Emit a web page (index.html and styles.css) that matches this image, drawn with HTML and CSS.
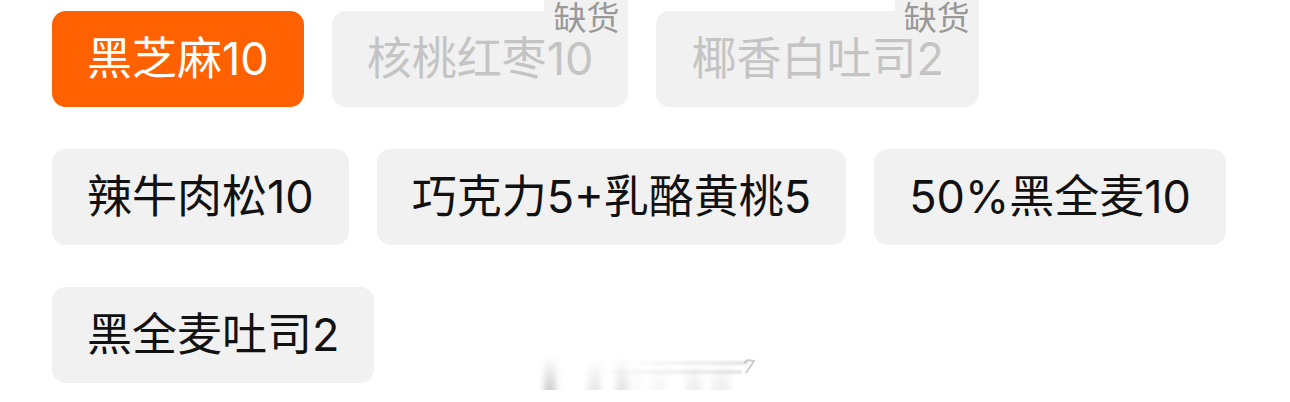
FILE: index.html
```
<!DOCTYPE html>
<html lang="zh-CN">
<head>
    <meta charset="UTF-8">
    <meta name="viewport" content="width=device-width, initial-scale=1.0">
    <title>选择口味</title>
    <link rel="stylesheet" href="styles.css">
</head>
<body>
    <div class="options">
        <button type="button" class="option selected">黑芝麻10</button>
        <button type="button" class="option" disabled>核桃红枣10<span class="badge">缺货</span></button>
        <button type="button" class="option" disabled>椰香白吐司2<span class="badge">缺货</span></button>
        <button type="button" class="option">辣牛肉松10</button>
        <button type="button" class="option">巧克力5+乳酪黄桃5</button>
        <button type="button" class="option">50%黑全麦10</button>
        <button type="button" class="option">黑全麦吐司2</button>
    </div>

    <!-- Faded watermark -->
    <svg class="watermark" viewBox="0 0 230 40" aria-hidden="true">
        <defs>
            <linearGradient id="fade" x1="0" y1="0" x2="0" y2="1">
                <stop offset="0" stop-color="#777" stop-opacity="0"/>
                <stop offset="1" stop-color="#777" stop-opacity="0.35"/>
            </linearGradient>
            <linearGradient id="line" x1="0" y1="0" x2="1" y2="0">
                <stop offset="0" stop-color="#999" stop-opacity="0"/>
                <stop offset="1" stop-color="#999" stop-opacity="0.25"/>
            </linearGradient>
            <filter id="soft" x="-5%" y="-10%" width="110%" height="110%">
                <feGaussianBlur stdDeviation="3 0"/>
            </filter>
            <filter id="haze" x="-5%" y="-100%" width="110%" height="300%">
                <feGaussianBlur stdDeviation="1"/>
            </filter>
        </defs>
        <g fill="url(#fade)" filter="url(#soft)">
            <rect x="14" y="2" width="12" height="34"/>
            <rect x="58" y="6" width="13" height="30" opacity="0.5"/>
            <rect x="86" y="4" width="12" height="32" opacity="0.6"/>
            <rect x="103" y="10" width="6" height="26" opacity="0.2"/>
            <rect x="122" y="6" width="14" height="30" opacity="0.2"/>
            <rect x="156" y="6" width="16" height="30" opacity="0.35"/>
            <rect x="182" y="8" width="18" height="28" opacity="0.35"/>
        </g>
        <rect x="90" y="7" width="128" height="4" fill="url(#line)" filter="url(#haze)"/>
        <rect x="60" y="16" width="152" height="4" fill="url(#line)" filter="url(#haze)"/>
        <path d="M214 9 L218 6 L224 7 L216 19" fill="none" stroke="#aaa" stroke-opacity="0.6" stroke-width="2"/>
    </svg>
</body>
</html>
```

FILE: styles.css
```
body {
    margin: 0;
    background-color: #fff;
    font-family: Inter, "Noto Sans CJK SC", sans-serif;
}

.options {
    display: flex;
    flex-wrap: wrap;
    gap: 42px 28px;
    padding: 11px 52px 0;
}

.option {
    position: relative;
    isolation: isolate;
    height: 96px;
    padding: 0 35px;
    border: none;
    border-radius: 14px;
    background-color: #f1f1f1;
    color: #111;
    font-family: inherit;
    font-size: 45px;
    font-weight: 370;
    line-height: 96px;
    white-space: nowrap;
}

.option.selected {
    background-color: #ff6000;
    color: #fff;
}

.option:disabled {
    color: #c4c4c4;
}

/* Out of stock label, hangs over the top right corner */
.badge {
    position: absolute;
    z-index: -1;
    top: -11px;
    right: 0;
    height: 36px;
    padding: 0 9px;
    background-color: #f1f1f1;
    color: #999;
    font-size: 33px;
    line-height: 36px;
}

.watermark {
    display: block;
    width: 230px;
    height: 40px;
    margin: -29px auto 0;
}
```
